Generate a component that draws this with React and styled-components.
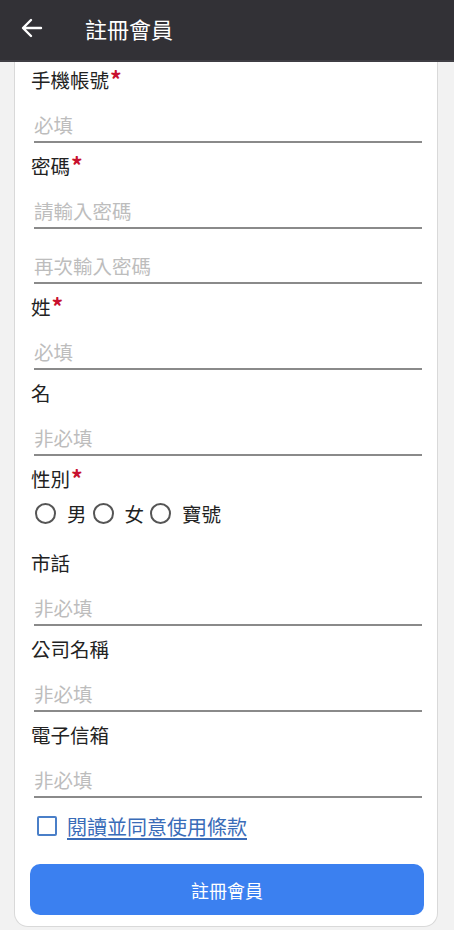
import React, { useState } from "react";
import styled, { createGlobalStyle } from "styled-components";

const GlobalStyle = createGlobalStyle`
  html, body {
    margin: 0;
    padding: 0;
    background: #f2f2f2;
    font-family: "Noto Sans CJK TC", "Noto Sans", sans-serif;
  }
  * {
    box-sizing: border-box;
  }
`;

const Page = styled.div`
  width: 454px;
  height: 930px;
  overflow: hidden;
  display: flex;
  flex-direction: column;
  background: #f2f2f2;
`;

const Header = styled.header`
  height: 62px;
  flex-shrink: 0;
  display: flex;
  align-items: center;
  background: #323136;
  border-bottom: 2px solid #3f3e44;
  color: #fff;
  padding: 0 0 4px 20px;
`;

const BackButton = styled.button`
  background: none;
  border: none;
  padding: 0;
  width: 24px;
  height: 24px;
  display: flex;
  align-items: center;
  justify-content: center;
  color: #fff;
  cursor: pointer;
`;

const Title = styled.h1`
  margin: 0 0 0 41px;
  font-size: 22px;
  font-weight: 400;
`;

const Card = styled.form`
  margin: 0 16px 4px 14px;
  flex: 1;
  background: #fff;
  border: 1px solid #d9d9d9;
  border-top: none;
  border-radius: 0 0 14px 14px;
  padding: 4px 13px 11px 15px;
  display: flex;
  flex-direction: column;
`;

const Field = styled.div`
  display: flex;
  flex-direction: column;
  margin-bottom: 9px;
`;

const Label = styled.label`
  height: 28px;
  line-height: 28px;
  font-size: 19.5px;
  color: #222;
  padding-left: 1px;
`;

const Required = styled.span`
  color: #c8102e;
  font-weight: 700;
  font-size: 23px;
  line-height: 1;
  vertical-align: -1px;
  margin-left: 1px;
`;

const Input = styled.input`
  display: block;
  width: calc(100% - 6px);
  margin: ${(p) => (p.$extra ? "6px" : "0")} 0 0 4px;
  border: none;
  border-bottom: 2px solid #8a8a8a;
  border-radius: 0;
  padding: 16px 0 3px 0;
  height: 49px;
  line-height: 28px;
  font-size: 19.5px;
  font-family: inherit;
  color: #222;
  outline: none;
  background: transparent;

  &::placeholder {
    color: #bdbdbd;
  }
`;

const RadioRow = styled.div`
  display: flex;
  align-items: center;
  height: 28px;
  margin: 6px 0 22px 5px;
`;

const RadioOption = styled.label`
  display: flex;
  align-items: center;
  font-size: 19.5px;
  color: #222;
  margin-right: 6px;
  cursor: pointer;
`;

const RadioCircle = styled.span`
  width: 21px;
  height: 21px;
  border-radius: 50%;
  border: 2.5px solid ${(p) => (p.$checked ? "#3b7ff0" : "#555")};
  margin-right: 11px;
  display: flex;
  align-items: center;
  justify-content: center;

  &::after {
    content: "";
    width: 10px;
    height: 10px;
    border-radius: 50%;
    background: ${(p) => (p.$checked ? "#3b7ff0" : "transparent")};
  }
`;

const AgreeRow = styled.label`
  display: flex;
  align-items: center;
  height: 36px;
  padding-left: 7px;
  margin-top: 1px;
  cursor: pointer;
`;

const CheckBox = styled.span`
  width: 20px;
  height: 20px;
  border: 2.5px solid #4a7fc8;
  border-radius: 2px;
  margin-right: 10px;
  background: ${(p) => (p.$checked ? "#4a7fc8" : "transparent")};
`;

const TermsLink = styled.a`
  font-size: 20px;
  color: #3a6cb8;
  text-decoration: underline;
  text-underline-offset: 3px;
`;

const SubmitButton = styled.button`
  margin-top: 20px;
  height: 51px;
  width: 100%;
  border: none;
  border-radius: 10px;
  background: #3b80f0;
  color: #fff;
  font-size: 18px;
  font-family: inherit;
  cursor: pointer;
`;

const ArrowIcon = () => (
  <svg width="22" height="20" viewBox="0 0 22 20" fill="none">
    <path
      d="M20 10H3M10 2L2 10l8 8"
      stroke="#fff"
      strokeWidth="2.4"
      strokeLinecap="round"
      strokeLinejoin="round"
    />
  </svg>
);

const TextField = ({ label, required, placeholder, extra }) => (
  <Field>
    <Label>
      {label}
      {required && <Required>*</Required>}
    </Label>
    <Input placeholder={placeholder} type="text" />
    {extra && <Input $extra placeholder={extra} type="password" />}
  </Field>
);

const App = () => {
  const [gender, setGender] = useState(null);
  const [agree, setAgree] = useState(false);

  return (
    <>
      <GlobalStyle />
      <Page>
        <Header>
          <BackButton type="button">
            <ArrowIcon />
          </BackButton>
          <Title>註冊會員</Title>
        </Header>
        <Card onSubmit={(e) => e.preventDefault()}>
          <TextField label="手機帳號" required placeholder="必填" />
          <TextField
            label="密碼"
            required
            placeholder="請輸入密碼"
            extra="再次輸入密碼"
          />
          <TextField label="姓" required placeholder="必填" />
          <TextField label="名" placeholder="非必填" />

          <Label>
            性別<Required>*</Required>
          </Label>
          <RadioRow>
            {["男", "女", "寶號"].map((g) => (
              <RadioOption key={g} onClick={() => setGender(g)}>
                <RadioCircle $checked={gender === g} />
                {g}
              </RadioOption>
            ))}
          </RadioRow>

          <TextField label="市話" placeholder="非必填" />
          <TextField label="公司名稱" placeholder="非必填" />
          <TextField label="電子信箱" placeholder="非必填" />

          <AgreeRow onClick={() => setAgree(!agree)}>
            <CheckBox $checked={agree} />
            <TermsLink href="#">閱讀並同意使用條款</TermsLink>
          </AgreeRow>

          <SubmitButton type="submit">註冊會員</SubmitButton>
        </Card>
      </Page>
    </>
  );
};

export default App;
